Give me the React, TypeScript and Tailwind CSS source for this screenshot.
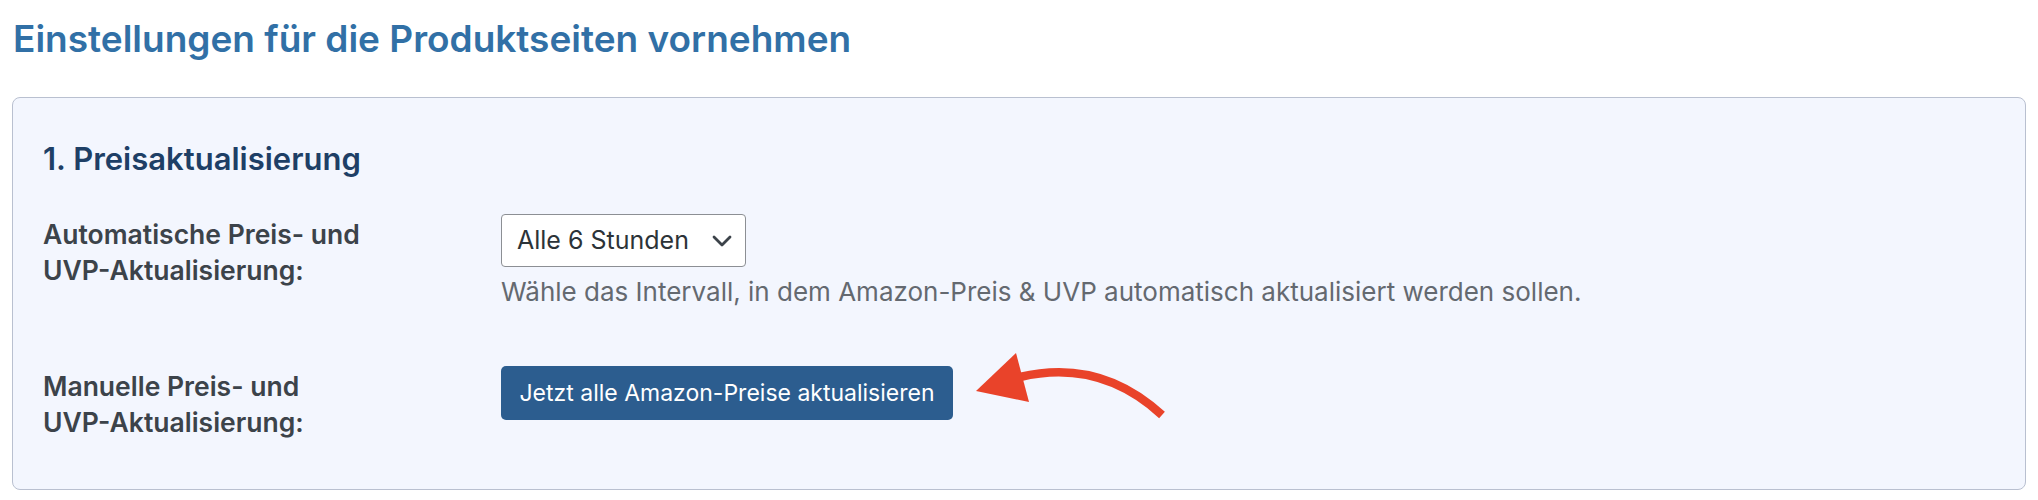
import React from 'react';

const Arrow: React.FC = () => (
  <svg
    className="absolute left-0 top-0 pointer-events-none"
    width="2038"
    height="500"
    viewBox="0 0 2038 500"
  >
    <path d="M 1020 377 Q 1100 358 1162 415" fill="none" stroke="#e9432a" strokeWidth="8.5" />
    <polygon points="976,391 1016,353 1029,402" fill="#e9432a" />
  </svg>
);

const Chevron: React.FC = () => (
  <svg width="20" height="12" viewBox="0 0 20 12" className="shrink-0">
    <polyline points="2,2 10,10 18,2" fill="none" stroke="#3c434a" strokeWidth="2.8" strokeLinecap="round" strokeLinejoin="round" />
  </svg>
);

const App: React.FC = () => {
  return (
    <div className="relative w-[2038px] h-[500px] bg-white px-[12px] font-['Inter',sans-serif]">
      {/* Page title */}
      <h1 className="pt-[15px] pl-[1px] text-[37px] leading-[48px] font-semibold text-[#3170a6]">
        Einstellungen für die Produktseiten vornehmen
      </h1>

      {/* Settings card */}
      <div className="mt-[34px] rounded-[8px] border border-[#b9c0d0] bg-[#f3f6fe] pl-[30px] pt-[41px] pb-[49px]">
        <h2 className="text-[31px] leading-[40px] font-semibold text-[#1e3f66]">1. Preisaktualisierung</h2>

        {/* Row: automatic update */}
        <div className="mt-[35px] flex items-start">
          <div className="w-[458px] pt-[2px] text-[26.5px] leading-[36px] font-semibold text-[#3c434a]">
            Automatische Preis- und
            <br />
            UVP-Aktualisierung:
          </div>
          <div className="flex flex-col items-start">
            <div className="flex h-[53px] w-[245px] items-center justify-between rounded-[4px] border border-[#8c8f94] bg-white pl-[15px] pr-[13px] text-[25px] text-[#2c3338]">
              <span>Alle 6 Stunden</span>
              <Chevron />
            </div>
            <p className="mt-[8px] text-[26px] leading-[34px] text-[#646970]">
              Wähle das Intervall, in dem Amazon-Preis &amp; UVP automatisch aktualisiert werden sollen.
            </p>
          </div>
        </div>

        {/* Row: manual update */}
        <div className="mt-[57px] flex items-start">
          <div className="w-[458px] pt-[2px] text-[26.5px] leading-[36px] font-semibold text-[#3c434a]">
            Manuelle Preis- und
            <br />
            UVP-Aktualisierung:
          </div>
          <button className="h-[54px] w-[452px] rounded-[5px] bg-[#2c5d8f] text-[23px] font-normal text-white">
            Jetzt alle Amazon-Preise aktualisieren
          </button>
        </div>
      </div>

      <Arrow />
    </div>
  );
};

export default App;
